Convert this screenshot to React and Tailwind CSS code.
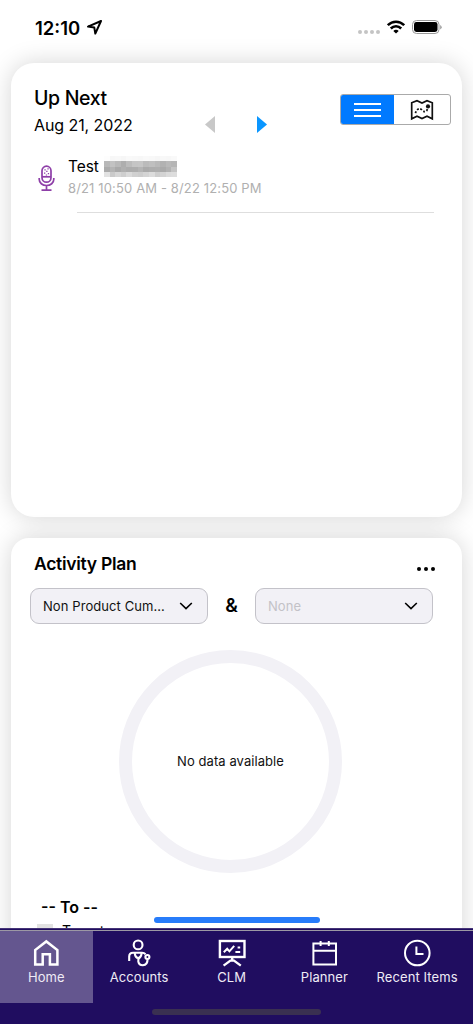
import React from "react";

const StatusBar = () => (
  <header className="h-[63px] shrink-0 flex justify-between pl-[35px] pr-[31px] pt-[15px]">
    <div className="flex items-center h-6">
      <span className="mt-px text-[18.5px] font-semibold leading-6 w-[50px] whitespace-nowrap">12:10</span>
      <svg width="18" height="18" viewBox="0 0 18 18" className="ml-px" fill="none" stroke="#000" strokeWidth="2" strokeLinejoin="round">
        <path d="M15 3L2 8.6L8.3 9.6L9.3 15.6Z" />
      </svg>
    </div>
    <div className="flex items-center h-6">
      <svg width="22" height="14" viewBox="0 0 22 14" fill="#c4c4c4">
        <circle cx="2" cy="12" r="2" />
        <circle cx="8" cy="12" r="2" />
        <circle cx="14" cy="12" r="2" />
        <circle cx="20" cy="12" r="2" />
      </svg>
      <svg width="18" height="14" viewBox="0 0 18 14" className="ml-[7px]" fill="none" stroke="#000" strokeWidth="2.6">
        <path d="M0.8 5.2C5.4 0.5 12.6 0.5 17.2 5.2" />
        <path d="M3.8 8.5C6.8 5.5 11.2 5.5 14.2 8.5" />
        <path d="M9 13.6L6.3 10.9C7.8 9.5 10.2 9.5 11.7 10.9Z" fill="#000" stroke="none" />
      </svg>
      <svg width="30" height="14" viewBox="0 0 30 14" className="ml-[7px]">
        <rect x="0.5" y="0.5" width="26.5" height="13" rx="4" fill="none" stroke="#999" />
        <rect x="2" y="2" width="23.5" height="10" rx="2.4" fill="#000" />
        <path d="M28.3 5V9.4Q29.6 8.7 29.6 7.2T28.3 5Z" fill="#888" />
      </svg>
    </div>
  </header>
);

const MicIcon = () => (
  <svg width="17" height="27" viewBox="0 0 17 27" fill="none" stroke="#8e3fa8" strokeWidth="1.7">
    <rect x="4" y="1.2" width="9" height="16" rx="4.5" />
    <path d="M4 11.8H13" />
    <path d="M1.2 13V14.2C1.2 18 4.4 20.5 8.5 20.5S15.8 18 15.8 14.2V13M8.5 20.5V25M3.5 25.2H13.5" />
    <path d="M6.4 4.8h1.3M9.4 3.8h1.3M8.2 6.4h1.3M6 8.2h1.3M9.8 8.6h1.3M7.8 10h1.3" strokeWidth="1.2" />
  </svg>
);

const MapIcon = () => (
  <svg width="24" height="22" viewBox="0 0 24 22" fill="none" stroke="#111" strokeWidth="1.7">
    <path d="M1.7 3.8L7 1.7L12 4L17 1.7L22.3 3.8V19.8L17 17.2L12 19.6L7 17.2L1.7 19.8Z" />
    <path d="M5.3 14L6.8 11.2Q9.5 8.5 12 11Q14.5 13.8 16.8 11.5L18.3 8.5" strokeWidth="1.8" strokeDasharray="1.9 1.6" />
    <circle cx="18" cy="7.4" r="2.1" fill="#111" stroke="none" />
  </svg>
);

// shades of the pixelated part of the name, row by row
const mosaic = [
  ["#fdfdfd", "#f7f7f7", "#f8f8f8", "#f6f6f6", "#f9f9f9", "#f8f8f8", "#f7f7f7", "#f9f9f9", "#f8f8f8", "#f6f6f6", "#f8f8f8", "#f7f7f7", "#f9f9f9"],
  ["#b8b8b8", "#c2c2c2", "#b9b9b9", "#aeaeae", "#bcbcbc", "#c5c5c5", "#c6c6c6", "#bbbbbb", "#bfbfbf", "#b9b9b9", "#b2b2b2", "#b9b9b9", "#b5b5b5"],
  ["#ababab", "#b4b4b4", "#a9a9a9", "#b0b0b0", "#acacac", "#adadad", "#b4b4b4", "#aaaaaa", "#adadad", "#aeaeae", "#aaaaaa", "#b2b2b2", "#c4c4c4"],
  ["#e2e2e2", "#cacaca", "#d6d6d6", "#cecece", "#dadada", "#d0d0d0", "#cdcdcd", "#d4d4d4", "#dcdcdc", "#cecece", "#d3d3d3", "#dbdbdb", "#dddddd"],
];

const Redacted = () => (
  <svg width="73" height="21" viewBox="0 0 13 4" preserveAspectRatio="none" shapeRendering="crispEdges">
    {mosaic.map((row, y) =>
      row.map((fill, x) => <rect key={`${x}-${y}`} x={x} y={y} width="1" height="1" fill={fill} />)
    )}
  </svg>
);

const UpNext = () => (
  <section className="h-[454px] shrink-0 rounded-[23px] bg-white shadow-[0_0_24px_rgba(0,0,0,0.17)]">
    <div className="flex pl-[23px] pr-[11px] pt-[22px]">
      <div className="w-[171px]">
        <h2 className="mt-px text-[19.5px] leading-6 font-medium tracking-[-0.35px]">Up Next</h2>
        <p className="mt-[3px] text-[16px] leading-6 tracking-[-0.08px] whitespace-nowrap">Aug 21, 2022</p>
      </div>
      <div className="flex gap-[42px] pt-[31px]">
        <svg width="10" height="17" viewBox="0 0 10 17"><path d="M10 0V17L0 8.5Z" fill="#c8c8c8" /></svg>
        <svg width="10" height="17" viewBox="0 0 10 17"><path d="M0 0V17L10 8.5Z" fill="#0a96ff" /></svg>
      </div>
      <div className="ml-auto mt-[9px] flex h-[31px] w-[111px] overflow-hidden rounded-[3px] border border-[#aaa]">
        <button className="flex w-[53px] flex-col items-center justify-center gap-[4px] bg-[#007aff]">
          <span className="h-[2px] w-[27px] bg-white"></span>
          <span className="h-[2px] w-[27px] bg-white"></span>
          <span className="h-[2px] w-[27px] bg-white"></span>
        </button>
        <button className="flex flex-1 items-center justify-center">
          <MapIcon />
        </button>
      </div>
    </div>
    <div className="flex pl-[27px] pt-[17px]">
      <div className="pt-[11px]">
        <MicIcon />
      </div>
      <div className="ml-[13px]">
        <div className="flex h-6 items-center gap-[5px]">
          <span className="mt-px text-[15.5px] leading-6 tracking-[-0.1px]">Test</span>
          <Redacted />
        </div>
        <p className="text-[13px] leading-5 tracking-[0.14px] text-[#b0b0b0] whitespace-nowrap">
          8/21 10:50 AM - 8/22 12:50 PM
        </p>
      </div>
    </div>
    <hr className="ml-[66px] mr-[28px] mt-[14px] border-[#dedede]" />
  </section>
);

const Select = ({ label, disabled }) => (
  <button className="flex h-9 w-[178px] items-center justify-between rounded-[9px] border border-[#c3c2c9] bg-[#f2f1f6] pl-3 pr-[14px]">
    <span className={`mt-px text-[13px] tracking-[0.08px] whitespace-nowrap ${disabled ? "text-[#c3c2c7]" : "text-[#111]"}`}>{label}</span>
    <svg width="14" height="8" viewBox="0 0 14 8" fill="none" stroke="#000" strokeWidth="1.6">
      <path d="M1.2 1L7 6.6L12.8 1" />
    </svg>
  </button>
);

const ActivityPlan = () => (
  <section className="mt-[21px] h-[480px] shrink-0 rounded-[18px] bg-white shadow-[0_0_24px_rgba(0,0,0,0.17)]">
    <div className="flex justify-between pl-[23px] pr-[26px] pt-[13px]">
      <h2 className="mt-px -mb-px text-[17.5px] leading-6 font-semibold tracking-[-0.28px]">Activity Plan</h2>
      <svg width="19" height="4" viewBox="0 0 19 4" className="mt-4">
        <circle cx="2" cy="2" r="2" />
        <circle cx="9" cy="2" r="2" />
        <circle cx="16" cy="2" r="2" />
      </svg>
    </div>
    <div className="mt-[13px] flex items-center justify-between pl-[19px] pr-[29px]">
      <Select label="Non Product Cum..." />
      <span className="text-[19px] leading-6 font-semibold">&amp;</span>
      <Select label="None" disabled />
    </div>
    <div className="ml-[108px] mt-[26px] flex size-[223px] items-center justify-center rounded-full border-[13px] border-[#f2f1f6]">
      <span className="mt-px text-[13px] tracking-[0.07px] text-[#111] whitespace-nowrap">No data available</span>
    </div>
    <p className="ml-[30px] mt-[22px] text-[16px] leading-6 font-semibold">-- To --</p>
    <div className="ml-[26px] mt-[4px] flex">
      <span className="mt-px h-4 w-4 bg-[#e2e2e2]"></span>
      <span className="-mt-[2px] ml-[9px] text-[14px] leading-5">Target</span>
    </div>
  </section>
);

const HomeIcon = () => (
  <svg width="28" height="28" viewBox="0 0 28 28" fill="none" stroke="#fff" strokeWidth="2.5">
    <path d="M3.2 25.6V11L14.3 2.4L25.4 11V25.6H17.9V15.3H10.7V25.6Z" />
  </svg>
);

const AccountsIcon = () => (
  <svg width="28" height="28" viewBox="0 0 28 28" fill="none" stroke="#fff" strokeWidth="2.1">
    <circle cx="13.1" cy="5.9" r="4.4" />
    <path d="M4.2 22V17.5Q4.2 13.8 8 13.8H17Q19.3 13.8 20.5 15.2" />
    <path d="M9.7 14Q10.3 18.7 13.2 19Q16 18.7 16.7 14" />
    <path d="M14.8 18.2Q12.8 20 13.3 22.5Q14 26.2 17.8 26.2Q22.8 25.8 22.5 20.2" />
    <circle cx="22.4" cy="18" r="2" />
  </svg>
);

const ClmIcon = () => (
  <svg width="28" height="28" viewBox="0 0 28 28" fill="none" stroke="#fff" strokeWidth="2.4">
    <rect x="1.9" y="2" width="24.6" height="16" />
    <path d="M14.2 18V21.5M5.6 26.6L12.4 21.6H16L22.8 26.6" />
    <path d="M5.8 13.3L9.2 9.8L11.4 12.3L16.2 6.8M17.4 13H22.2M19.6 8.6H22.2" strokeWidth="2" />
  </svg>
);

const PlannerIcon = () => (
  <svg width="28" height="28" viewBox="0 0 28 28" fill="none" stroke="#fff" strokeWidth="2">
    <rect x="3.4" y="4.5" width="22.6" height="21" />
    <path d="M3.4 11.8H26M10.6 2V7M18.8 2V7" />
  </svg>
);

const RecentIcon = () => (
  <svg width="28" height="28" viewBox="0 0 28 28" fill="none" stroke="#fff" strokeWidth="2">
    <circle cx="14.3" cy="14" r="12.3" />
    <path d="M13.4 7.5V15H20.5" />
  </svg>
);

const tabs = [
  { label: "Home", icon: HomeIcon, active: true },
  { label: "Accounts", icon: AccountsIcon },
  { label: "CLM", icon: ClmIcon },
  { label: "Planner", icon: PlannerIcon },
  { label: "Recent Items", icon: RecentIcon },
];

const TabBar = () => (
  <nav className="h-24 shrink-0 border-t border-[#453477] bg-[#200d60]">
    <div className="h-[2px] border-b border-[#9c98a4]"></div>
    <div className="flex h-[72px]">
      {tabs.map(({ label, icon: Icon, active }) => (
        <button
          key={label}
          className={`flex w-[92.7px] shrink-0 flex-col items-center pt-[7.5px] ${active ? "bg-[#64568f]" : ""}`}
        >
          <Icon />
          <span className="mt-px text-[13px] leading-[18px] tracking-[0.1px] text-[#eeebf5] whitespace-nowrap">{label}</span>
        </button>
      ))}
    </div>
    <div className="mx-auto mt-[6px] h-[6px] w-[169px] rounded-full bg-[#3a3051]"></div>
  </nav>
);

export default function App() {
  return (
    <div className="flex h-[1024px] w-[473px] flex-col overflow-hidden bg-white font-['Inter',sans-serif] text-black">
      <StatusBar />
      <main className="relative min-h-0 flex-1">
        {/* shadows bleed upwards behind the status bar, the bottom is cut by the tab bar */}
        <div className="-mt-[40px] flex h-[905px] flex-col overflow-hidden px-[11px] pt-[40px]">
          <UpNext />
          <ActivityPlan />
        </div>
        <div className="absolute bottom-[5px] left-[154px] h-[6px] w-[166px] rounded-full bg-[#277cfa]"></div>
      </main>
      <TabBar />
    </div>
  );
}
